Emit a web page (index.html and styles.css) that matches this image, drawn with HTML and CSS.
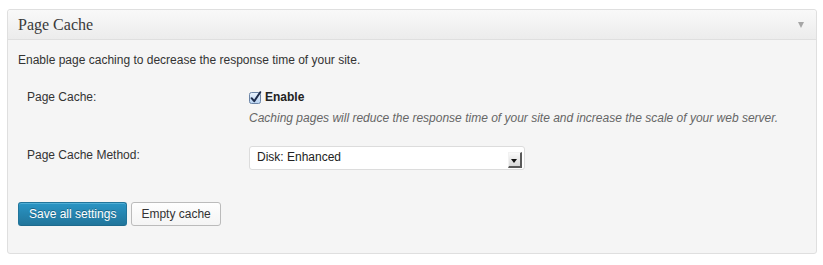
FILE: index.html
```html
<!DOCTYPE html>
<html lang="en">

<head>
    <meta charset="UTF-8">
    <meta name="viewport" content="width=device-width, initial-scale=1.0">
    <title>Page Cache</title>
    <link rel="stylesheet" href="styles.css">
</head>

<body>
    <div class="postbox">
        <div class="hndle">
            <span>Page Cache</span>
            <span class="handlediv"></span>
        </div>
        <div class="inside">
            <p class="intro">Enable page caching to decrease the response time of your site.</p>

            <div class="form-row">
                <div class="th">Page Cache:</div>
                <div class="td">
                    <label class="check">
                        <svg width="13" height="13" viewBox="0 0 13 13">
                            <defs>
                                <linearGradient id="cb" x1="0" y1="0" x2="0" y2="1">
                                    <stop offset="0" stop-color="#eaf3fd"></stop>
                                    <stop offset="1" stop-color="#b7d2f1"></stop>
                                </linearGradient>
                            </defs>
                            <rect x="0.5" y="1.5" width="11" height="11" rx="2" fill="url(#cb)" stroke="#6b84a6"></rect>
                            <path d="M2.6 7.2 L5.2 10.2 L11.2 1.2" fill="none" stroke="#1d2c4c" stroke-width="2" stroke-linecap="round" stroke-linejoin="round"></path>
                        </svg>
                        <b>Enable</b>
                    </label>
                    <div class="description">Caching pages will reduce the response time of your site and increase the scale of your web server.</div>
                </div>
            </div>

            <div class="form-row method">
                <div class="th">Page Cache Method:</div>
                <div class="td">
                    <div class="select">
                        <span class="value">Disk: Enhanced</span>
                        <span class="arrow"></span>
                    </div>
                </div>
            </div>

            <div class="submit">
                <button class="button button-primary">Save all settings</button>
                <button class="button">Empty cache</button>
            </div>
        </div>
    </div>
</body>

</html>
```

FILE: styles.css
```css
body {
    margin: 0;
    padding: 9px 6px 0 7px;
    background: #fff;
    font-family: "Liberation Sans", Arial, sans-serif;
    font-size: 12px;
    color: #333;
}

.postbox {
    border: 1px solid #dfdfdf;
    border-radius: 3px;
    background: #f5f5f5;
    box-shadow: 0 1px 0 #fff inset;
}

.hndle {
    height: 29px;
    display: flex;
    align-items: center;
    justify-content: space-between;
    padding: 0 12px 0 10px;
    border-bottom: 1px solid #dfdfdf;
    border-radius: 3px 3px 0 0;
    background: linear-gradient(to bottom, #f9f9f9, #ececec);
    font-family: "Liberation Serif", "Times New Roman", serif;
    font-size: 16px;
    color: #3a3a3a;
}

.hndle span:first-child {
    padding-top: 1px;
}

.handlediv {
    width: 0;
    height: 0;
    border-left: 3.5px solid transparent;
    border-right: 3.5px solid transparent;
    border-top: 6px solid #a6a6a6;
}

.inside {
    padding: 12px 10px 27px 10px;
}

.intro {
    margin: 0;
    line-height: 16px;
}

.form-row {
    display: grid;
    grid-template-columns: 222px 1fr;
    margin: 21px 0 0 9px;
    line-height: 16px;
}

.form-row.method {
    margin-top: 20px;
}

.form-row.method .th {
    padding-top: 1px;
}

.check {
    display: flex;
    align-items: center;
    gap: 3px;
}

.check b {
    color: #222;
}

.description {
    margin-top: 5px;
    font-style: italic;
    color: #666;
}

.select {
    width: 265px;
    height: 22px;
    display: flex;
    align-items: center;
    justify-content: space-between;
    padding: 0 2px 0 7px;
    background: #fff;
    border: 1px solid #dcdcdc;
    border-radius: 3px;
    color: #222;
}

.select .value {
    padding-bottom: 3px;
}

.arrow {
    width: 14px;
    height: 16px;
    margin-top: 3px;
    box-sizing: border-box;
    border-right: 2px solid #5a5a5a;
    border-bottom: 2px solid #5a5a5a;
    border-top: 1px solid #f2f2f2;
    border-left: 1px solid #f2f2f2;
    background: linear-gradient(to bottom, #fafafa, #d9d9d9);
    position: relative;
}

.arrow:after {
    content: "";
    position: absolute;
    left: 2px;
    top: 6px;
    border-left: 3.5px solid transparent;
    border-right: 3.5px solid transparent;
    border-top: 4px solid #111;
}

.submit {
    display: flex;
    gap: 4px;
    margin-top: 32px;
}

.button {
    height: 24px;
    padding: 0 9px 1px;
    border-radius: 3px;
    font-family: "Liberation Sans", Arial, sans-serif;
    font-size: 12px;
    border: 1px solid #bbb;
    background: linear-gradient(to bottom, #fefefe, #f4f4f4);
    color: #333;
    cursor: pointer;
}

.button-primary {
    padding: 0 10px 1px;
    border-color: #21759b #21759b #1e6a8d;
    background: linear-gradient(to bottom, #2a95c5, #21759b);
    color: #fff;
    text-shadow: 0 -1px 0 rgba(0, 0, 0, 0.3);
    box-shadow: inset 0 1px 0 rgba(120, 200, 230, 0.5);
}
```
